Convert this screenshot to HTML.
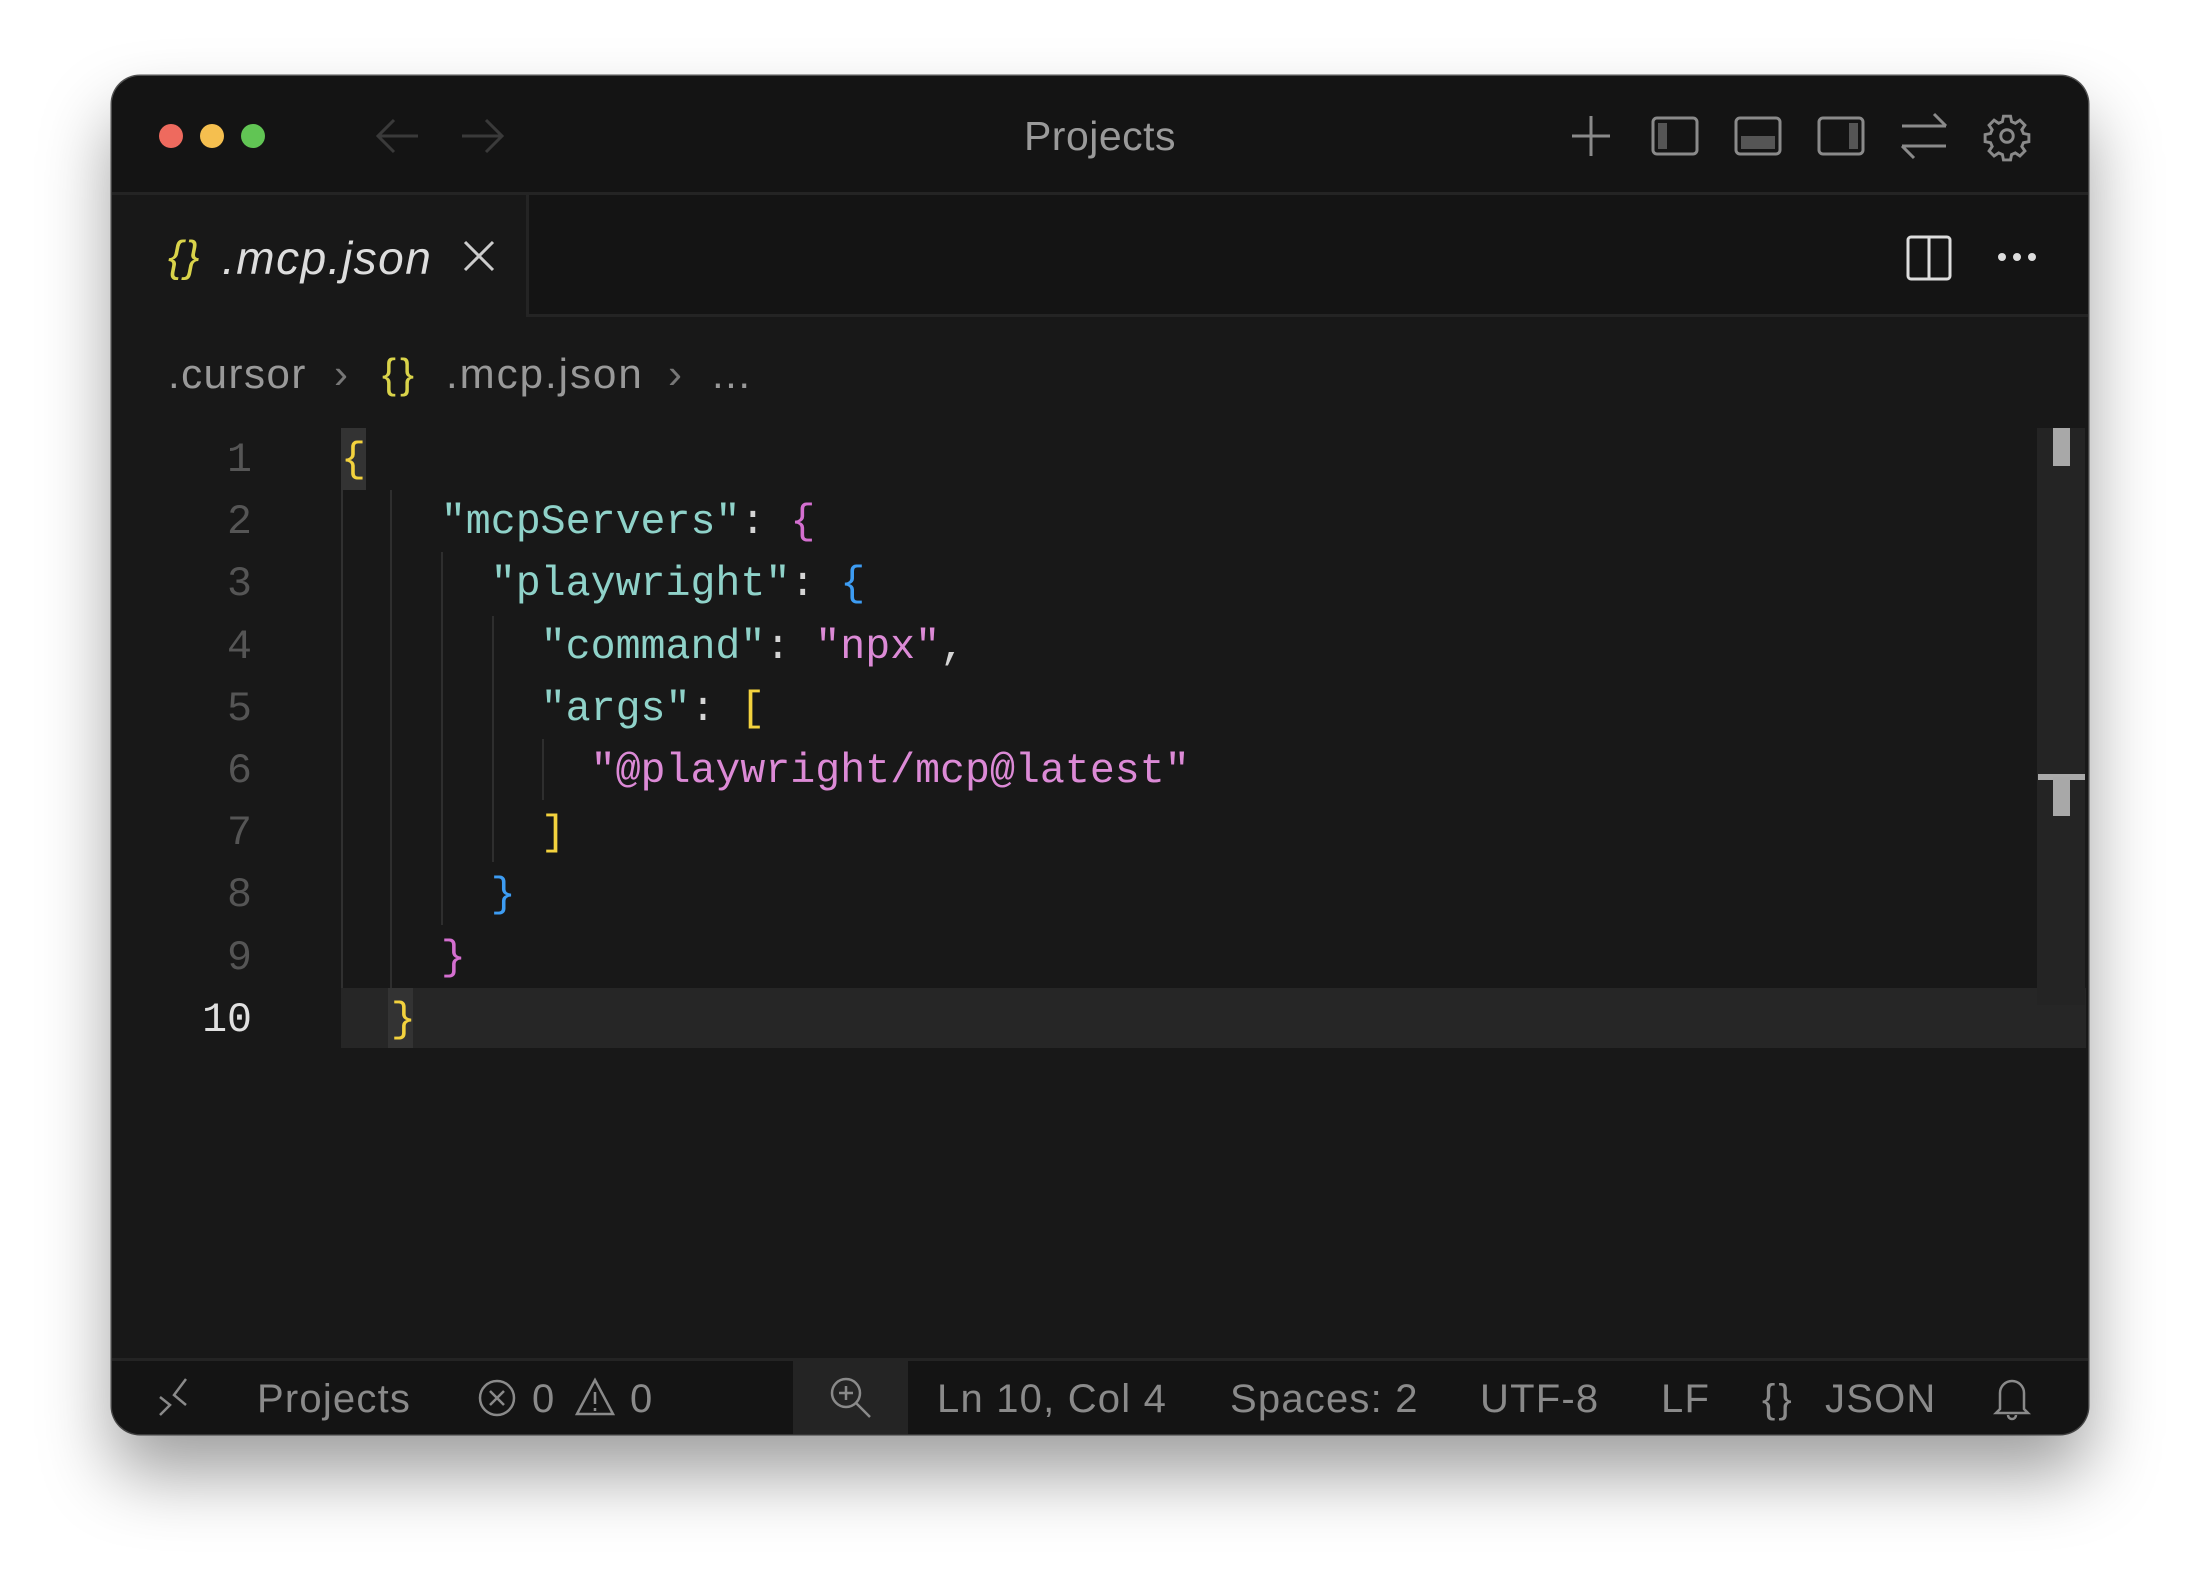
<!DOCTYPE html>
<html><head><meta charset="utf-8"><style>
*{margin:0;padding:0;box-sizing:border-box}
body{width:2200px;height:1582px;background:#fff;position:relative;overflow:hidden;font-family:"Liberation Sans",sans-serif}
.win{position:absolute;left:112px;top:76px;width:1976px;height:1358px;background:#181818;border-radius:28px;overflow:hidden;box-shadow:0 40px 70px rgba(0,0,0,.38),0 0 0 1.5px #555}
.abs{position:absolute}
.title{left:0;top:0;width:1976px;height:119px;background:#141414;border-bottom:3px solid #242424}
.dot{width:24px;height:24px;border-radius:50%;top:48px}
.tabbar{left:0;top:119px;width:1976px;height:122px;background:#141414;border-bottom:3px solid #242424}
.tab{left:0;top:0;width:417px;height:122px;background:#181818;border-right:3px solid #242424}
.t{color:#9a9a9a;font-size:40px;white-space:nowrap;line-height:1}
.bc{color:#999;font-size:42px;white-space:nowrap;line-height:1;top:277px;letter-spacing:1.5px}
.code{font-family:"Liberation Mono","DejaVu Sans Mono",monospace;font-size:41.6px;white-space:pre;line-height:62.2px}
.ln{width:140px;text-align:right;color:#555;left:0}
.k{color:#8fd2c9}.s{color:#dc8ad6}.p{color:#d4d4d4}.y{color:#f3d23e}.b{color:#3d9cf2}.m{color:#d46fd0}
.g{width:2px;background:#2e2e2e}
.sb{left:0;top:1282px;width:1976px;height:76px;background:#141414;border-top:3px solid #242424}
.st{color:#8a8a8a;font-size:40px;top:18px;white-space:nowrap;line-height:1;letter-spacing:1.2px}
</style></head><body>
<div class="win">
 <div class="abs title">
  <div class="abs dot" style="left:47px;background:#ee6a5e"></div>
  <div class="abs dot" style="left:88px;background:#f5bf4f"></div>
  <div class="abs dot" style="left:129px;background:#61c554"></div>
  <svg class="abs" style="left:262px;top:40px" width="48" height="40" viewBox="0 0 48 40" fill="none" stroke="#3a3a3a" stroke-width="3"><path d="M44 20H6M20 4L4 20l16 16"/></svg>
  <svg class="abs" style="left:346px;top:40px" width="48" height="40" viewBox="0 0 48 40" fill="none" stroke="#3a3a3a" stroke-width="3"><path d="M4 20h38M28 4l16 16-16 16"/></svg>
  <div class="abs t" style="left:0;width:1976px;text-align:center;top:40px;color:#9a9a9a;font-size:41px;letter-spacing:0.5px">Projects</div>
  <svg class="abs" style="left:1455px;top:36px" width="48" height="48" viewBox="0 0 48 48" stroke="#8a8a8a" stroke-width="3" fill="none"><path d="M24 4v40M5 24h38"/></svg>
  <svg class="abs" style="left:1538px;top:36px" width="50" height="48" viewBox="0 0 50 48" fill="none"><rect x="3" y="6" width="44" height="36" rx="4" stroke="#8a8a8a" stroke-width="3"/><rect x="8" y="11" width="9" height="26" fill="#555"/></svg>
  <svg class="abs" style="left:1621px;top:36px" width="50" height="48" viewBox="0 0 50 48" fill="none"><rect x="3" y="6" width="44" height="36" rx="4" stroke="#8a8a8a" stroke-width="3"/><rect x="8" y="24" width="34" height="13" fill="#555"/></svg>
  <svg class="abs" style="left:1704px;top:36px" width="50" height="48" viewBox="0 0 50 48" fill="none"><rect x="3" y="6" width="44" height="36" rx="4" stroke="#8a8a8a" stroke-width="3"/><rect x="33" y="11" width="9" height="26" fill="#555"/></svg>
  <svg class="abs" style="left:1786px;top:34px" width="52" height="52" viewBox="0 0 52 52" fill="none" stroke="#8a8a8a" stroke-width="3"><path d="M4 16h44M36 4l12 12M4 36h44M16 48L4 36"/></svg>
  <svg class="abs" style="left:1870px;top:34px" width="50" height="52" viewBox="0 0 24 24" fill="none" stroke="#8a8a8a" stroke-width="1.4"><circle cx="12" cy="12" r="3"/><path d="M10.3 2.5h3.4l.5 2.6 1.8.8 2.2-1.5 2.4 2.4-1.5 2.2.8 1.8 2.6.5v3.4l-2.6.5-.8 1.8 1.5 2.2-2.4 2.4-2.2-1.5-1.8.8-.5 2.6h-3.4l-.5-2.6-1.8-.8-2.2 1.5-2.4-2.4 1.5-2.2-.8-1.8-2.6-.5v-3.4l2.6-.5.8-1.8-1.5-2.2 2.4-2.4 2.2 1.5 1.8-.8z"/></svg>
 </div>
 <div class="abs tabbar">
  <div class="abs tab">
   <div class="abs t" style="left:56px;top:40px;font-size:44px;font-style:italic;color:#d9d34a;letter-spacing:2px">{}</div>
   <div class="abs t" style="left:110px;top:40px;font-size:46px;font-style:italic;color:#ddd;letter-spacing:1.5px">.mcp.json</div>
   <svg class="abs" style="left:350px;top:44px" width="34" height="34" viewBox="0 0 34 34" stroke="#ccc" stroke-width="3"><path d="M3 3l28 28M31 3L3 31"/></svg>
  </div>
  <svg class="abs" style="left:1792px;top:38px" width="50" height="50" viewBox="0 0 50 50" fill="none" stroke="#ddd" stroke-width="3"><rect x="4" y="4" width="42" height="42" rx="3"/><path d="M25 4v42"/></svg>
  <svg class="abs" style="left:1885px;top:56px" width="40" height="12" viewBox="0 0 40 12" fill="#ddd"><circle cx="5" cy="6" r="4"/><circle cx="20" cy="6" r="4"/><circle cx="35" cy="6" r="4"/></svg>
 </div>
 <div class="abs bc" style="left:56px">.cursor</div>
 <div class="abs bc" style="left:222px;color:#777">›</div>
 <div class="abs bc" style="left:270px;color:#d9d34a;letter-spacing:4px">{}</div>
 <div class="abs bc" style="left:334px;letter-spacing:2px">.mcp.json</div>
 <div class="abs bc" style="left:556px;color:#777">›</div>
 <div class="abs bc" style="left:600px">...</div>

 <div class="abs" style="left:229px;top:352px;width:2px;height:620px;background:#303030"></div>
 <div class="abs" style="left:229px;top:912px;width:1745px;height:60px;background:#262626"></div>
 <div class="abs" style="left:229px;top:352px;width:25px;height:62px;background:#333"></div>
 <div class="abs" style="left:276px;top:912px;width:25px;height:60px;background:#333"></div>
 <div class="abs g" style="left:278px;top:414px;height:498px"></div>
 <div class="abs g" style="left:329px;top:476px;height:373px"></div>
 <div class="abs g" style="left:380px;top:540px;height:246px"></div>
 <div class="abs g" style="left:430px;top:663px;height:61px"></div>
 <div class="abs code ln" style="top:354px">1
2
3
4
5
6
7
8
9
<span style="color:#e0e0e0">10</span></div>
 <div class="abs code" style="left:229px;top:354px"><span class="y">{</span>
    <span class="k">"mcpServers"</span><span class="p">:</span> <span class="m">{</span>
      <span class="k">"playwright"</span><span class="p">:</span> <span class="b">{</span>
        <span class="k">"command"</span><span class="p">:</span> <span class="s">"npx"</span><span class="p">,</span>
        <span class="k">"args"</span><span class="p">:</span> <span class="y">[</span>
          <span class="s">"@playwright/mcp@latest"</span>
        <span class="y">]</span>
      <span class="b">}</span>
    <span class="m">}</span>
  <span class="y">}</span></div>
 <div class="abs" style="left:1925px;top:352px;width:48px;height:577px;background:#242424"></div>
 <div class="abs" style="left:1941px;top:352px;width:17px;height:38px;background:#a8a8a8"></div>
 <div class="abs" style="left:1926px;top:698px;width:47px;height:6px;background:#aaa"></div>
 <div class="abs" style="left:1941px;top:701px;width:17px;height:39px;background:#a8a8a8"></div>

 <div class="abs sb">
  <svg class="abs" style="left:44px;top:14px" width="34" height="44" viewBox="0 0 34 44" fill="none" stroke="#8a8a8a" stroke-width="2.5"><path d="M4 22l10 8-10 10M30 4L18 20l12 10"/></svg>
  <div class="abs st" style="left:145px">Projects</div>
  <svg class="abs" style="left:365px;top:17px" width="40" height="40" viewBox="0 0 40 40" fill="none" stroke="#8a8a8a" stroke-width="2.5"><circle cx="20" cy="20" r="17"/><path d="M13 13l14 14M27 13L13 27"/></svg>
  <div class="abs st" style="left:420px">0</div>
  <svg class="abs" style="left:462px;top:15px" width="42" height="42" viewBox="0 0 42 42" fill="none" stroke="#8a8a8a" stroke-width="2.5"><path d="M21 4L3 38h36z M21 16v12M21 32v3"/></svg>
  <div class="abs st" style="left:518px">0</div>
  <div class="abs" style="left:681px;top:-3px;width:115px;height:76px;background:#242424"></div>
  <svg class="abs" style="left:716px;top:14px" width="46" height="46" viewBox="0 0 46 46" fill="none" stroke="#8a8a8a" stroke-width="2.5"><circle cx="18" cy="18" r="14"/><path d="M18 11v14M11 18h14M28 28l14 14"/></svg>
  <div class="abs st" style="left:825px">Ln 10, Col 4</div>
  <div class="abs st" style="left:1118px">Spaces: 2</div>
  <div class="abs st" style="left:1368px">UTF-8</div>
  <div class="abs st" style="left:1549px">LF</div>
  <div class="abs st" style="left:1650px;letter-spacing:3px">{}</div>
  <div class="abs st" style="left:1713px">JSON</div>
  <svg class="abs" style="left:1880px;top:12px" width="40" height="50" viewBox="0 0 40 50" fill="none" stroke="#8a8a8a" stroke-width="2.5"><path d="M8 36V20a12 12 0 0 1 24 0v16l4 4H4z M16 42a4 4 0 0 0 8 0"/></svg>
 </div>
</div>
</body></html>
